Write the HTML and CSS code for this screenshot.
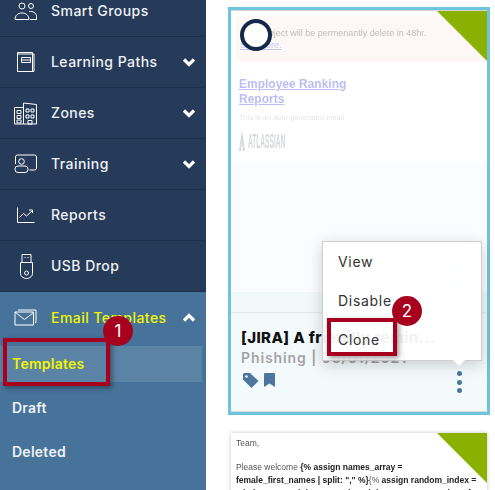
FILE: index.html
```html
<!DOCTYPE html>
<html>
<head>
    <meta charset="utf-8">
    <link rel="stylesheet" href="styles.css">
</head>
<body>
    <div class="page">
        <div class="sidebar">
            <div class="nav-item">
                <div class="nav-icon">
                    <svg width="24" height="20" viewBox="0 0 24 20"><circle cx="8" cy="5" r="3"/><circle cx="17" cy="5" r="2.5"/><path d="M1 18.5c0-4 3-6.500 7-6.500s7 2.500 7 6.500zM15 10.500c4-.5 7.500 1.500 7.500 5v3H16"/></svg>
                </div>
                <span class="nav-label">Smart Groups</span>
            </div>
            <div class="nav-item">
                <div class="nav-icon">
                    <svg width="20" height="22" viewBox="0 0 20 22"><path d="M1.500 1.500h15v1.500h1.500v17.500H1.500zM1.500 3h15v17.500M5.500 6.500h9v5h-9zM5.500 9h9"/></svg>
                </div>
                <span class="nav-label">Learning Paths</span>
                <svg class="chevron" width="14" height="10" viewBox="0 0 14 10"><path d="M2 2.500l5 5 5-5"/></svg>
            </div>
            <div class="nav-item">
                <div class="nav-icon">
                    <svg width="24" height="23" viewBox="0 0 24 23"><path d="M.5 22V5.500h9V22zM9.500 22V1l13 1.500V22zM3 8.500h4v3H3zM3 13.500h4v3H3zM3 18h4v3H3zM12 7h3v3h-3zM17 7h3v3h-3zM12 13h3v3h-3zM17 13h3v3h-3zM14 22v-3.500h4V22z"/></svg>
                </div>
                <span class="nav-label">Zones</span>
                <svg class="chevron" width="14" height="10" viewBox="0 0 14 10"><path d="M2 2.500l5 5 5-5"/></svg>
            </div>
            <div class="nav-item">
                <div class="nav-icon">
                    <svg width="24" height="20" viewBox="0 0 24 20"><path d="M1.500 10V3q0-2 2-2h17q2 0 2 2v11q0 2-2 2h-5"/><circle cx="7.500" cy="7.500" r="2.800"/><rect x="1" y="12" width="13" height="6.500" rx="3"/></svg>
                </div>
                <span class="nav-label">Training</span>
                <svg class="chevron" width="14" height="10" viewBox="0 0 14 10"><path d="M2 2.500l5 5 5-5"/></svg>
            </div>
            <div class="nav-item">
                <div class="nav-icon">
                    <svg width="18" height="17" viewBox="0 0 18 17"><path d="M.5 .5v15h17" /><path d="M2.500 10.500l4-4 3 2.500 6-5.500M12 3h3.500v3"/></svg>
                </div>
                <span class="nav-label">Reports</span>
            </div>
            <div class="nav-item">
                <div class="nav-icon">
                    <svg width="14" height="26" viewBox="0 0 14 26"><path d="M3 1.500h9v8H3zM5.500 4.500h1M8.500 4.500h1M1.500 9.500h12v11a6 5 0 0 1-12 0z"/><circle cx="7.500" cy="20" r="2"/></svg>
                </div>
                <span class="nav-label">USB Drop</span>
            </div>
            <div class="nav-group">
                <div class="nav-item nav-item-open">
                    <div class="nav-icon">
                        <svg width="23" height="17" viewBox="0 0 23 17"><path d="M4 1h18v12.500h-1M1 3h18.500v13H1zM1.500 3.500l9 7 9-7"/></svg>
                    </div>
                    <span class="nav-label">Email Templates</span>
                    <svg class="chevron" width="14" height="10" viewBox="0 0 14 10"><path d="M2 7.500l5-5 5 5"/></svg>
                </div>
                <div class="sub-list">
                    <div class="sub-item sub-item-active">Templates</div>
                    <div class="sub-item">Draft</div>
                    <div class="sub-item">Deleted</div>
                </div>
            </div>
        </div>

        <div class="main">
            <div class="card card-selected">
                <div class="preview">
                    <div class="notice">
                        <div>Your project will be permenantly delete in 48hr.</div>
                        <a class="notice-link">See more.</a>
                    </div>
                    <div class="corner"></div>
                    <div class="avatar-ring"></div>
                    <div class="mail-body">
                        <a class="mail-heading">Employee Ranking<br>Reports</a>
                        <div class="mail-note">This is an auto-generated email</div>
                        <div class="atlassian">
                            <svg width="6" height="21" viewBox="0 0 9 22" preserveAspectRatio="none"><path d="M4.500 0L9 22H6L4.500 12 3 22H0z"/></svg>
                            <span class="atlassian-name">ATLASSIAN</span>
                        </div>
                    </div>
                    <div class="mail-fade"></div>
                </div>
                <div class="preview-band"></div>
                <div class="card-footer">
                    <div class="card-title">[JIRA] A friendly remin...</div>
                    <div class="card-meta">Phishing | 06/01/2021</div>
                    <div class="card-actions">
                        <div class="card-tags">
                            <svg width="16" height="15" viewBox="0 0 16 15"><path d="M0 1.500V6.500L8.500 15 15.500 8 7 0H1.500Q0 0 0 1.500z"/><circle cx="3.500" cy="3.500" r="1.300" fill="#f4fafc"/></svg>
                            <svg width="11" height="14" viewBox="0 0 11 14"><path d="M0 1Q0 0 1 0h9q1 0 1 1v13L5.500 10.500 0 14z"/></svg>
                        </div>
                        <div class="kebab"><i></i><i></i><i></i></div>
                    </div>
                </div>
                <div class="search-ghost">
                    <svg width="34" height="34" viewBox="0 0 34 34"><circle cx="15" cy="13" r="8"/><path d="M20 19l8 8"/></svg>
                </div>
                <div class="menu">
                    <div class="menu-item">View</div>
                    <div class="menu-item">Disable</div>
                    <div class="menu-item">Clone</div>
                </div>
            </div>

            <div class="card card-next">
                <div class="corner"></div>
                <div class="next-body">
                    <p>Team,</p>
                    <p>Please welcome <b>{% assign names_array =<br>female_first_names | split: "," %}</b>{% <b>assign random_index =<br>0 | plus: "now" | date: "%s" | modulo: names_array.size %}</b></p>
                </div>
            </div>
        </div>

        <div class="callout callout-templates"></div>
        <div class="step step-one">1</div>
        <div class="callout callout-clone"></div>
        <div class="step step-two">2</div>
    </div>
</body>
</html>
```

FILE: styles.css
```css
body {
    margin: 0;
    background: white;
    font-family: Inter, "Noto Sans", sans-serif;
    overflow: hidden;
}

.page {
    position: relative;
    display: flex;
    width: 495px;
    height: 490px;
    overflow: hidden;
}

/* Sidebar */
.sidebar {
    flex: none;
    width: 206px;
    height: 504px;
    margin-top: -14px;
    background: #263b5a;
    display: flex;
    flex-direction: column;
}

.nav-item {
    flex: none;
    height: 50px;
    display: flex;
    align-items: center;
    border-bottom: 1px solid #1d304b;
    color: #eef1f5;
}

.nav-icon {
    flex: none;
    width: 51px;
    display: flex;
    align-items: center;
    justify-content: center;
}

.nav-icon svg {
    fill: none;
    stroke: white;
    stroke-width: 1;
}

.nav-label {
    flex: 1;
    padding-bottom: 1px;
    font-size: 14px;
    font-weight: 500;
    letter-spacing: 0.45px;
    white-space: nowrap;
}

.chevron {
    flex: none;
    margin-right: 10px;
    fill: none;
    stroke: white;
    stroke-width: 3.2;
}

.nav-group {
    flex: 1;
    background: #47739a;
}

.nav-item-open {
    border-bottom: none;
    height: 51px;
    color: #f1f500;
}

.sub-list {
    display: flex;
    flex-direction: column;
    gap: 8px;
    padding: 3px 4px 0 0;
}

.sub-item {
    height: 36px;
    line-height: 36px;
    padding-left: 12px;
    font-size: 14px;
    font-weight: 600;
    letter-spacing: 0.25px;
    color: #eef1f5;
}

.sub-item-active {
    background: #5a83a5;
    color: #f1f500;
}

/* Template cards */
.main {
    flex: 1;
    padding: 7px 5px 0 22px;
    display: flex;
    flex-direction: column;
    gap: 18px;
}

.card {
    position: relative;
    flex: none;
    background: white;
}

.card-selected {
    height: 402px;
    border: 3px solid #6fc3dc;
    display: flex;
    flex-direction: column;
}

.preview {
    position: relative;
    height: 281px;
    border-top: 1px solid #d5d5d5;
    background: white;
    filter: blur(0.3px);
}

.notice {
    margin: 5px 0 0 5px;
    height: 46px;
    padding: 11px 0 0 4px;
    box-sizing: border-box;
    background: #fdf8f6;
    font: 9px/12px "Liberation Sans", sans-serif;
    color: #bdbdbd;
    white-space: nowrap;
}

.notice-link {
    display: block;
    color: #c4c4f2;
    text-decoration: underline;
}

.corner {
    position: absolute;
    top: 0;
    right: 0;
    width: 50px;
    height: 50px;
    background: #8ab000;
    clip-path: polygon(0 0, 100% 0, 100% 100%);
}

.avatar-ring {
    position: absolute;
    top: 8px;
    left: 9px;
    width: 24px;
    height: 24px;
    border: 4px solid #14284b;
    border-radius: 50%;
    background: white;
}

.mail-body {
    padding: 15px 0 0 8px;
}

.mail-heading {
    display: block;
    font: bold 12px/14.5px "Liberation Sans", sans-serif;
    color: #bdbdf5;
    text-decoration: underline;
}

.mail-note {
    margin-top: 7px;
    font: 7.500px/10px "Liberation Sans", sans-serif;
    color: #e6e6e6;
}

.atlassian {
    display: flex;
    align-items: center;
    gap: 3px;
    margin-top: 6px;
    height: 22px;
    fill: #d6d8db;
}

.atlassian-name {
    display: inline-block;
    font: bold 11px/22px "Liberation Sans", sans-serif;
    color: #d6d8db;
    transform: scale(0.6, 1.9);
    transform-origin: left center;
}

.mail-fade {
    position: absolute;
    left: 0;
    right: 0;
    top: 152px;
    bottom: 0;
    background: #fafcff;
}

.preview-band {
    height: 20px;
    background: #f0f8fa;
    border-bottom: 1px solid #e2e6e8;
}

.card-footer {
    flex: 1;
    background: #f4fafc;
    padding: 16px 8px 0 10px;
    border-bottom: 1px solid #d8dcdd;
}

.card-title {
    font-size: 15px;
    font-weight: 800;
    line-height: 18px;
    letter-spacing: 0.4px;
    color: #111;
    white-space: nowrap;
}

.card-meta {
    margin-top: 2px;
    font-size: 14px;
    font-weight: 600;
    line-height: 18px;
    letter-spacing: 0.9px;
    color: #a3a3a3;
}

.card-actions {
    display: flex;
    justify-content: space-between;
    align-items: flex-start;
    margin-top: 4px;
}

.card-tags {
    display: flex;
    gap: 5px;
    padding: 2px 0 0 2px;
    fill: #4a76a0;
}

.kebab {
    display: flex;
    flex-direction: column;
    gap: 3.500px;
    margin-right: 17px;
}

.kebab i {
    width: 5px;
    height: 5px;
    border-radius: 50%;
    background: #4a76a0;
}

.search-ghost {
    position: absolute;
    left: 209px;
    top: 253px;
    width: 34px;
    height: 34px;
    border-radius: 6px;
    background: #f3f6f8;
    fill: none;
    stroke: #ecf0f2;
    stroke-width: 5;
}

.menu {
    position: absolute;
    left: 91px;
    top: 231px;
    width: 158px;
    height: 118px;
    border: 1px solid #cfcfcf;
    background: rgba(255, 255, 255, 0.95);
    box-shadow: 0 4px 14px rgba(0, 0, 0, 0.18);
    display: flex;
    flex-direction: column;
}

.menu::after {
    content: "";
    position: absolute;
    left: 130px;
    bottom: -6px;
    border-left: 6px solid transparent;
    border-right: 6px solid transparent;
    border-top: 6px solid white;
}

.menu-item {
    height: 39px;
    line-height: 39px;
    padding-left: 15px;
    font-size: 14px;
    letter-spacing: 0.7px;
    color: #333;
}

.card-next {
    height: 80px;
    margin-left: 3px;
    width: 256px;
    box-shadow: 0 0 4px rgba(90, 90, 130, 0.35);
}

.next-body {
    padding: 4px 5px;
    font: 8.500px/13px "Liberation Sans", sans-serif;
    color: #555;
    white-space: nowrap;
    filter: blur(0.3px);
}

.next-body p {
    margin: 0 0 11px;
}

.next-body b {
    color: #222;
}

/* Step callouts drawn over the screen */
.callout {
    position: absolute;
    box-sizing: border-box;
    border: 4px solid #a6001e;
    box-shadow: 2px 2px 5px rgba(0, 0, 0, 0.4);
}

.callout-templates {
    left: 3px;
    top: 338px;
    width: 107px;
    height: 48px;
}

.callout-clone {
    left: 327px;
    top: 318px;
    width: 70px;
    height: 38px;
}

.step {
    position: absolute;
    width: 30px;
    height: 30px;
    border-radius: 50%;
    background: #a6001e;
    color: white;
    font-size: 17px;
    line-height: 30px;
    text-align: center;
}

.step-one {
    left: 103px;
    top: 316px;
}

.step-two {
    left: 392px;
    top: 296px;
}
```
